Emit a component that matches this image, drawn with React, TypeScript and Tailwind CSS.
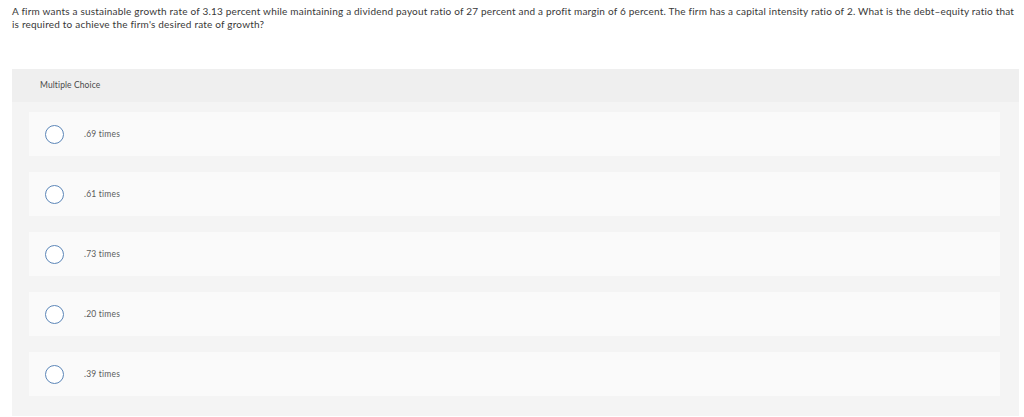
import React from "react";

const options = [".69 times", ".61 times", ".73 times", ".20 times", ".39 times"];

export default function App() {
  return (
    <div className="w-[1024px] h-[417px] overflow-hidden bg-white font-['Lato','Open_Sans',sans-serif]">
      <div className="pl-[12px] pr-[8px] pt-[5px] text-[10px] leading-[13px] text-[#383838] tracking-[0.2px]">
        A firm wants a sustainable growth rate of 3.13 percent while maintaining a dividend payout ratio of 27 percent and a profit margin of 6 percent. The firm has a capital intensity ratio of 2. What is the debt–equity ratio that is required to achieve the firm's desired rate of growth?
      </div>
      <div className="ml-[12px] mr-[5px] mt-[38px] bg-[#f4f4f4]">
        <div className="h-[33px] bg-[#efefef] pl-[28px] flex items-center text-[8.5px] tracking-[0.1px] text-[#4a4a4a]">
          Multiple Choice
        </div>
        <div className="pl-[17px] pr-[19px] pt-[10px] pb-[20px] flex flex-col gap-[16px]">
          {options.map((o) => (
            <div key={o} className="h-[44px] bg-[#fafafa] flex items-center">
              <div className="ml-[16px] w-[19px] h-[19px] rounded-full border border-[#5b86b8] bg-white" />
              <div className="ml-[20px] text-[8.5px] tracking-[0.2px] text-[#5a5a5a]">{o}</div>
            </div>
          ))}
        </div>
      </div>
    </div>
  );
}
